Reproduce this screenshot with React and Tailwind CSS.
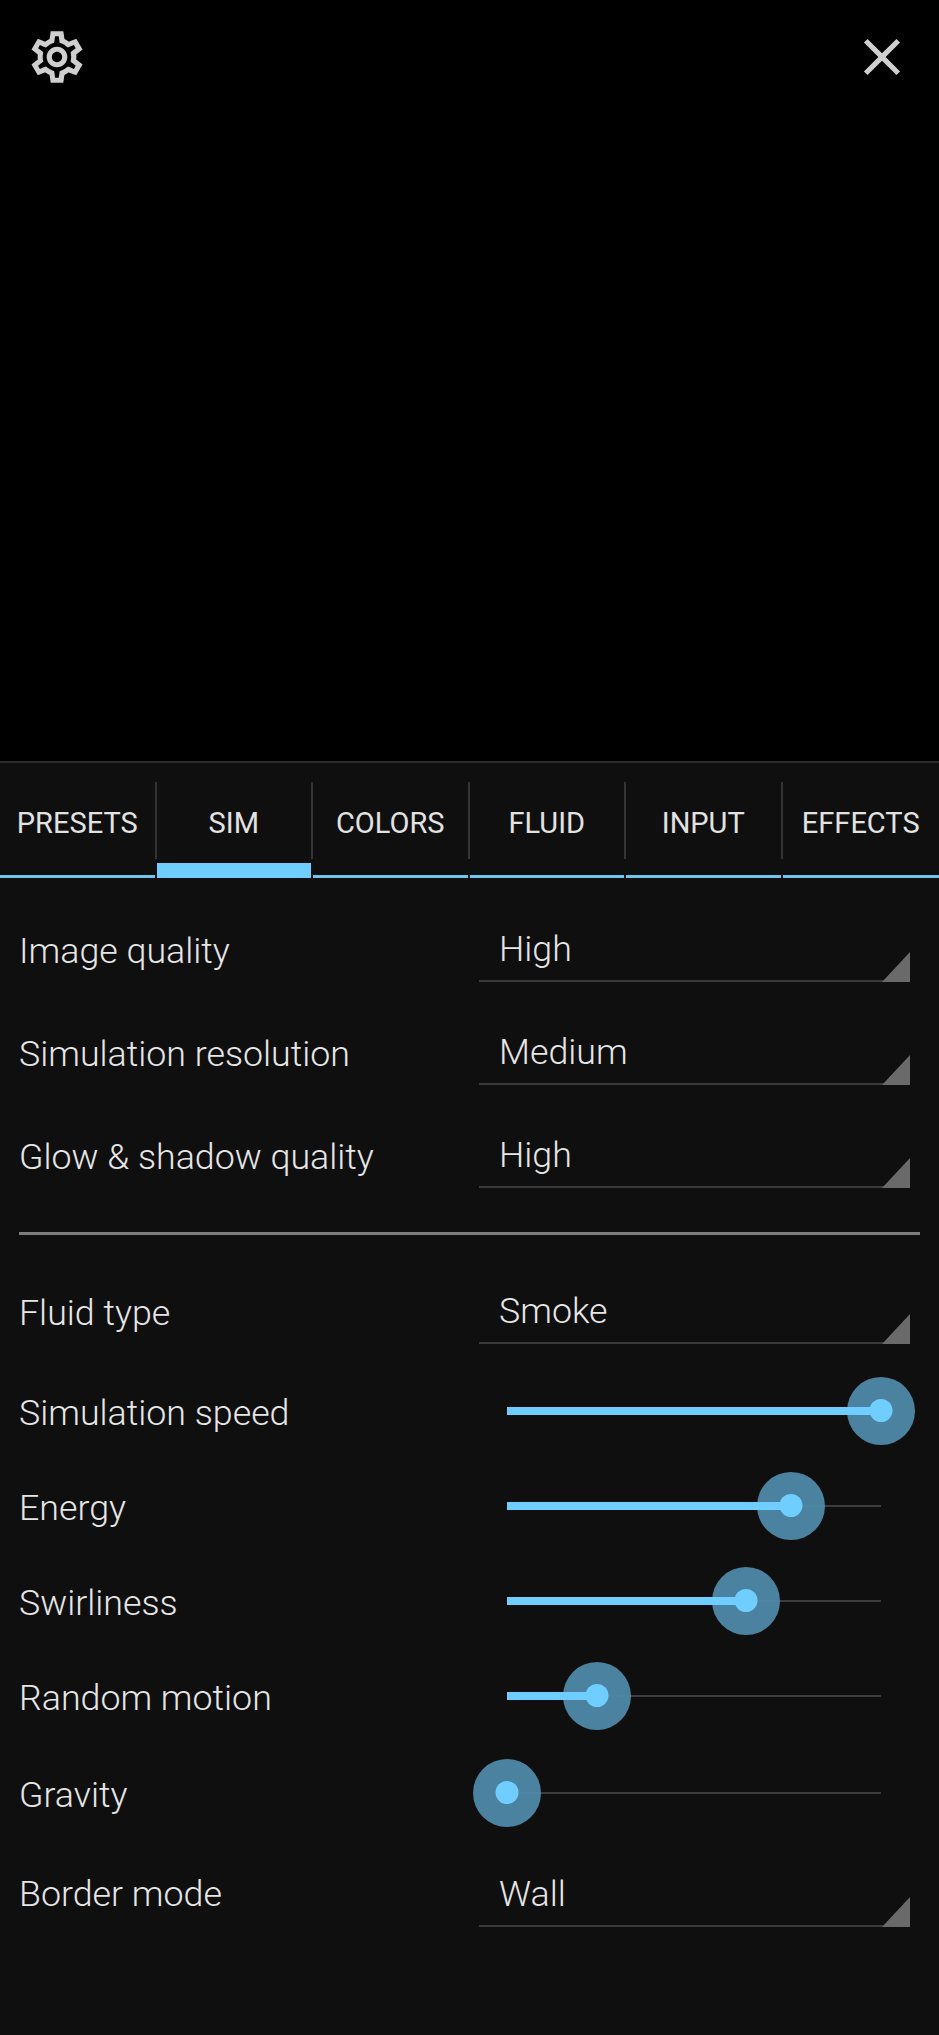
import React from "react";
import { MdClose } from "react-icons/md";

const tabs = ["PRESETS", "SIM", "COLORS", "FLUID", "INPUT", "EFFECTS"];

const SettingsIcon = () => (
  <svg width="62" height="62" viewBox="0 0 24 24" fill="currentColor" fillRule="evenodd">
    <path d="M19.44 12.99l-.01.02c.04-.33.08-.67.08-1.01 0-.34-.03-.66-.07-.99l.01.02 2.44-1.92-2.43-4.22-2.87 1.16.01.01c-.52-.4-1.09-.74-1.71-1h.01L14.44 2H9.57l-.44 3.07h.01c-.62.26-1.19.6-1.71 1l.01-.01-2.88-1.17-2.44 4.22 2.44 1.92.01-.02c-.04.33-.07.65-.07.99 0 .34.03.68.08 1.01l-.01-.02-2.1 1.65-.33.26 2.43 4.2 2.88-1.15-.02-.04c.53.41 1.1.75 1.73 1.01h-.03L9.58 22h4.85s.03-.18.06-.42l.38-2.65h-.01c.62-.26 1.2-.6 1.73-1.01l-.02.04 2.88 1.15 2.43-4.2s-.14-.12-.33-.26l-2.11-1.66zM17.42 11.28c.04.31.06.47.07.72 0 .25-.03.41-.07.72l-.14 1.13.89.7 1.08.84-.7 1.21-1.27-.51-1.04-.42-.9.68c-.43.32-.84.56-1.25.73l-1.06.43-.16 1.13-.2 1.35h-1.4l-.19-1.35-.16-1.13-1.06-.43c-.43-.18-.83-.41-1.23-.71l-.91-.7-1.06.43-1.27.51-.7-1.21 1.08-.84.89-.7-.14-1.13c-.03-.31-.05-.54-.05-.74s.02-.43.05-.73l.14-1.13-.89-.7-1.08-.84.7-1.21 1.27.51 1.04.42.9-.68c.43-.32.84-.56 1.25-.73l1.06-.43.16-1.13.2-1.35h1.39l.19 1.35.16 1.13 1.06.43c.43.18.83.41 1.23.71l.91.7 1.06-.43 1.27-.51.7 1.21-1.07.85-.89.7.14 1.13zM12 8c-2.21 0-4 1.79-4 4s1.79 4 4 4 4-1.79 4-4-1.79-4-4-4zm0 6c-1.1 0-2-.9-2-2s.9-2 2-2 2 .9 2 2-.9 2-2 2z" />
  </svg>
);

// dropdown with the little corner triangle
const Select = ({ value }) => (
  <div className="relative flex h-[64px] w-[431px] items-center border-b-2 border-[#3a3a3a] pt-[2px] pl-5">
    <span className="text-[35.75px] font-light leading-none text-[#e6e6e6]">{value}</span>
    <svg className="absolute right-0 bottom-[-2px]" width="28" height="30" viewBox="0 0 28 30">
      <polygon points="28,0 28,30 0,30" fill="#6a6a6a" />
    </svg>
  </div>
);

const Slider = ({ percent }) => (
  <div className="relative ml-7 h-[68px] w-[374px]">
    <div className="absolute top-[33px] left-0 h-[2px] w-full bg-[#3d3d3d]" />
    <div
      className="absolute top-0 h-[68px] w-[68px] -translate-x-1/2 rounded-full bg-[#4f89a8]/95"
      style={{ left: `${percent}%` }}
    />
    <div
      className="absolute top-[30px] left-0 h-[8px] bg-[#6fcdff]"
      style={{ width: `${percent}%` }}
    />
    <div
      className="absolute top-[22px] h-[23px] w-[23px] -translate-x-1/2 rounded-full bg-[#6fcdff]"
      style={{ left: `${percent}%` }}
    />
  </div>
);

const Row = ({ label, height, labelPad = "pt-[4px]", children }) => (
  <div className={`flex items-center justify-between pr-[29px] pl-[19px] ${height}`}>
    <span className={`text-[35.75px] font-light leading-none text-[#e6e6e6] ${labelPad}`}>
      {label}
    </span>
    <div className="w-[431px]">{children}</div>
  </div>
);

export default function App() {
  return (
    <div className="h-[2035px] w-[939px] overflow-hidden bg-[#0f0f0f] font-['Roboto',sans-serif]">
      <div className="flex h-[761px] items-start justify-between bg-black px-[26px] pt-[26px] text-[#cfcfcf]">
        <SettingsIcon />
        <MdClose size={62} />
      </div>

      <div className="border-t-2 border-[#2b2b2b] pt-[19px]">
        <div className="grid grid-cols-6">
          {tabs.map((tab, i) => (
            <div key={tab} className="flex h-[96px] flex-col">
              <div
                className={`flex h-[77px] items-center justify-center pt-[5px] text-[29px] leading-none text-[#e2e2e2] ${
                  i < tabs.length - 1 ? "border-r-2 border-[#333333]" : ""
                }`}
              >
                {tab}
              </div>
              <div className={i < tabs.length - 1 ? "mt-auto pr-[2px]" : "mt-auto"}>
                <div className={i === 1 ? "h-[15px] bg-[#6fcdff]" : "h-[3px] bg-[#72c3ee]"} />
              </div>
            </div>
          ))}
        </div>
      </div>

      <div className="pt-5">
        <Row label="Image quality" height="h-[103px]"><Select value="High" /></Row>
        <Row label="Simulation resolution" height="h-[103px]"><Select value="Medium" /></Row>
        <Row label="Glow & shadow quality" height="h-[103px]"><Select value="High" /></Row>

        <div className="mx-[19px] mt-[25px] h-[3px] bg-[#7d7d7d]" />

        <div className="mt-[28px]">
          <Row label="Fluid type" height="h-[98px]"><Select value="Smoke" /></Row>
        </div>
        <div className="mt-[2px]">
          <Row label="Simulation speed" height="h-[95px]" labelPad="pt-[6px]"><Slider percent={100} /></Row>
          <Row label="Energy" height="h-[95px]" labelPad="pt-[7px]"><Slider percent={76} /></Row>
          <Row label="Swirliness" height="h-[95px]" labelPad="pt-[7px]"><Slider percent={64} /></Row>
          <Row label="Random motion" height="h-[95px]" labelPad="pt-[7px]"><Slider percent={24} /></Row>
          <Row label="Gravity" height="h-[100px]" labelPad="pt-[6px]"><Slider percent={0} /></Row>
          <Row label="Border mode" height="h-[103px]" labelPad="pt-0"><Select value="Wall" /></Row>
        </div>
      </div>
    </div>
  );
}
